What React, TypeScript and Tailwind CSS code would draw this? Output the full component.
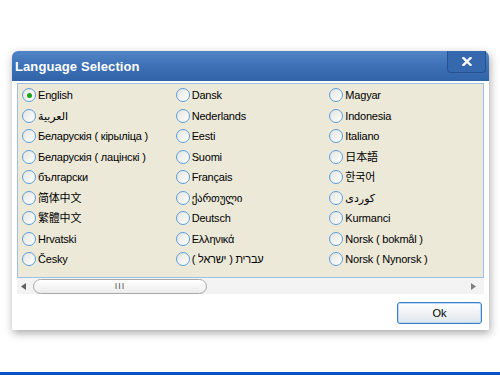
import React from "react";

const cols: string[][] = [
  ["English", "العربية", "Беларускія ( кірыліца )", "Беларускія ( лацінскі )", "български", "简体中文", "繁體中文", "Hrvatski", "Česky"],
  ["Dansk", "Nederlands", "Eesti", "Suomi", "Français", "ქართული", "Deutsch", "Ελληνικά", "עברית ( ישראל )"],
  ["Magyar", "Indonesia", "Italiano", "日本語", "한국어", "کوردی", "Kurmanci", "Norsk ( bokmål )", "Norsk ( Nynorsk )"],
];

function Radio({ checked }: { checked?: boolean }) {
  return (
    <span className="flex h-[14px] w-[14px] shrink-0 items-center justify-center rounded-full border border-[#5a9ede] bg-gradient-to-br from-[#e4e4de] to-white">
      {checked && <span className="h-[5px] w-[5px] rounded-full bg-[#21a121]" />}
    </span>
  );
}

export default function App() {
  const font = { fontFamily: '"Liberation Sans", "DejaVu Sans", "Noto Sans CJK SC", sans-serif' };
  return (
    <div className="relative flex h-[375px] w-[500px] flex-col bg-white" style={font}>
      <div className="ml-[12px] mt-[51px] flex w-[477px] flex-col rounded-t-[6px] bg-white shadow-[1px_3px_8px_rgba(0,0,0,0.35)]">
        <div className="flex h-[30px] items-center justify-between rounded-t-[6px] bg-gradient-to-b from-[#5185c6] via-[#3d70b5] to-[#3064a9] pl-[3px] pr-[3px]">
          <span className="text-[13px] font-bold leading-none tracking-[0.1px] text-white">Language Selection</span>
          <span className="flex h-[22px] w-[39px] -translate-y-[4px] items-center justify-center rounded-b-[4px] border border-t-0 border-[#25528f] bg-[#3668ad]">
            <svg width="10" height="9" viewBox="0 0 10 9">
              <path d="M1.5 1 L8.5 8 M8.5 1 L1.5 8" stroke="white" strokeWidth="2.4" strokeLinecap="square" />
            </svg>
          </span>
        </div>
        <div className="flex flex-col px-[5px] pt-[2px]">
          <div className="flex h-[195px] border border-[#9dc1e6] bg-[#ece9d8] pl-[4px] pt-[1px]">
            {cols.map((c, ci) => (
              <div key={ci} className="flex w-[155px] flex-col">
                {c.map((t, i) => (
                  <div key={t} className="flex h-[20.5px] items-center gap-[2px] text-[11px] tracking-[-0.2px] text-black">
                    <Radio checked={ci === 0 && i === 0} />
                    <span className="whitespace-nowrap" dir={t.startsWith("עברית") ? "rtl" : undefined}>{t}</span>
                  </div>
                ))}
              </div>
            ))}
          </div>
          <div className="flex h-[16px] items-center bg-[#f3f3f3]">
            <span className="ml-[4px] w-[8px]">
              <svg width="5" height="7" viewBox="0 0 5 7"><path d="M5 0 L0 3.5 L5 7Z" fill="#606060" /></svg>
            </span>
            <div className="ml-[4px] flex h-[15px] w-[174px] items-center justify-center rounded-full border border-[#a8a8a8] bg-gradient-to-b from-white to-[#ececec]">
              <span className="text-[9px] leading-none tracking-[1px] text-[#555]">III</span>
            </div>
            <div className="flex-1" />
            <span className="mr-[8px]">
              <svg width="5" height="7" viewBox="0 0 5 7"><path d="M0 0 L5 3.5 L0 7Z" fill="#808080" /></svg>
            </span>
          </div>
        </div>
        <div className="flex justify-end pb-[6px] pr-[7px] pt-[8px]">
          <button className="flex h-[22px] w-[85px] items-center justify-center rounded-[3px] border border-[#3c7fc4] bg-gradient-to-b from-white to-[#dfe6ec] text-[11px] text-black shadow-[inset_0_0_0_1px_#b8d8f4]">
            Ok
          </button>
        </div>
      </div>
      <div className="mt-auto h-[3px] w-full bg-[#0a50c8]" />
    </div>
  );
}
